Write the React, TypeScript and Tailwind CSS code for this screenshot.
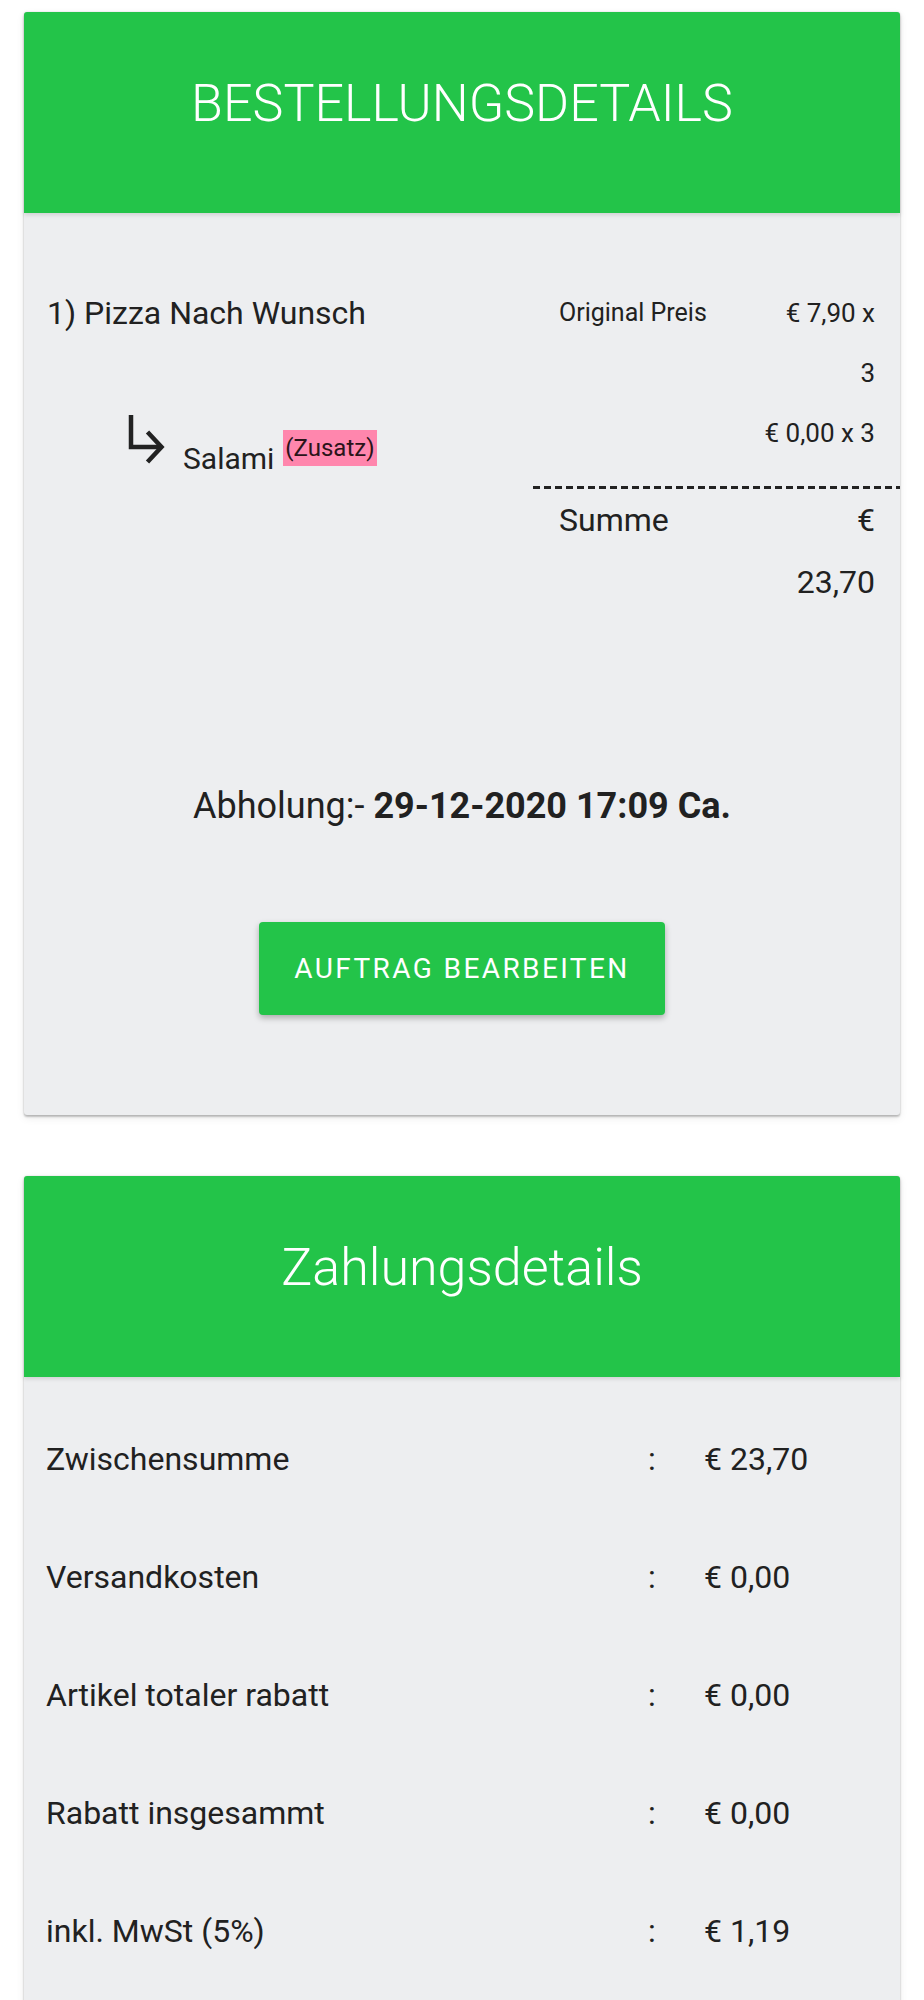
import React from 'react';

type PayRow = { label: string; value: string };

const payRows: PayRow[] = [
  { label: 'Zwischensumme', value: '€ 23,70' },
  { label: 'Versandkosten', value: '€ 0,00' },
  { label: 'Artikel totaler rabatt', value: '€ 0,00' },
  { label: 'Rabatt insgesammt', value: '€ 0,00' },
  { label: 'inkl. MwSt (5%)', value: '€ 1,19' },
];

const SubArrow: React.FC = () => (
  <svg width="40" height="52" viewBox="0 0 40 52" fill="none" className="mb-[11px] shrink-0">
    <path d="M5 1 V33 H35" stroke="#222" strokeWidth="4.5" />
    <path d="M21.5 18 L35.5 33 L21.5 48" stroke="#222" strokeWidth="4.5" strokeLinejoin="miter" />
  </svg>
);

const CardHeader: React.FC<{ title: string }> = ({ title }) => (
  <div className="relative z-10 h-[201px] rounded-t-[3px] bg-[#23c449] pt-[66px] text-center text-[52px] font-light leading-[52px] text-white shadow-[0_2px_4px_rgba(0,0,0,0.12)]">
    {title}
  </div>
);

const cardShadow = 'shadow-[0_2px_2px_rgba(0,0,0,0.22),0_3px_8px_rgba(0,0,0,0.08),0_0_2px_rgba(0,0,0,0.12)]';

const App: React.FC = () => {
  return (
    <div className="min-h-screen bg-white px-[24px] pt-[12px] font-['Roboto',sans-serif] text-[#212121]">
      {/* Bestellung */}
      <div className={`rounded-[3px] bg-[#edeef0] ${cardShadow}`}>
        <CardHeader title="BESTELLUNGSDETAILS" />

        <div className="flex pl-[23px] pt-[70px]">
          <div className="flex-1">
            <div className="text-[32px] leading-[60px]">1) Pizza Nach Wunsch</div>
            <div className="mt-[71px] flex items-end pl-[79px]">
              <SubArrow />
              <span className="ml-[17px] text-[30px] leading-[36px]">Salami</span>
              <span className="mb-[11px] ml-[9px] bg-[#ff86ad] px-[2px] py-[2px] text-[24px] leading-[32px] text-[#2a1419]">
                (Zusatz)
              </span>
            </div>
          </div>

          <div className="w-[367px]">
            <div className="flex justify-between pl-[26px] pr-[25px] leading-[60px]">
              <span className="text-[25px]">Original Preis</span>
              <span className="text-[26px]">€ 7,90 x</span>
            </div>
            <div className="pr-[25px] text-right text-[26px] leading-[60px]">3</div>
            <div className="pr-[25px] text-right text-[26px] leading-[60px]">€ 0,00 x 3</div>
            <div className="mt-[23px] h-[3px] bg-[repeating-linear-gradient(90deg,#222_0_7px,transparent_7px_11px)]" />
            <div className="flex justify-between pl-[26px] pr-[25px] text-[32px] leading-[62px]">
              <span>Summe</span>
              <span>€</span>
            </div>
            <div className="pr-[25px] text-right text-[32px] leading-[62px]">23,70</div>
          </div>
        </div>

        <div className="mt-[171px] text-center text-[36px] leading-[44px]">
          Abholung:- <span className="font-bold">29-12-2020 17:09 Ca.</span>
        </div>

        <div className="flex justify-center pb-[100px] pt-[94px]">
          <button className="h-[93px] w-[406px] rounded-[4px] bg-[#23c449] text-[28px] tracking-[2.4px] text-white shadow-[0_3px_6px_rgba(0,0,0,0.28)]">
            AUFTRAG BEARBEITEN
          </button>
        </div>
      </div>

      {/* Zahlung */}
      <div className={`mt-[61px] rounded-[3px] bg-[#edeef0] ${cardShadow}`}>
        <CardHeader title="Zahlungsdetails" />
        <div className="pb-[40px] pl-[22px] pt-[23px]">
          {payRows.map((row) => (
            <div key={row.label} className="grid grid-cols-[602px_56px_1fr] text-[32px] leading-[118px]">
              <span>{row.label}</span>
              <span>:</span>
              <span>{row.value}</span>
            </div>
          ))}
        </div>
      </div>
    </div>
  );
};

export default App;
